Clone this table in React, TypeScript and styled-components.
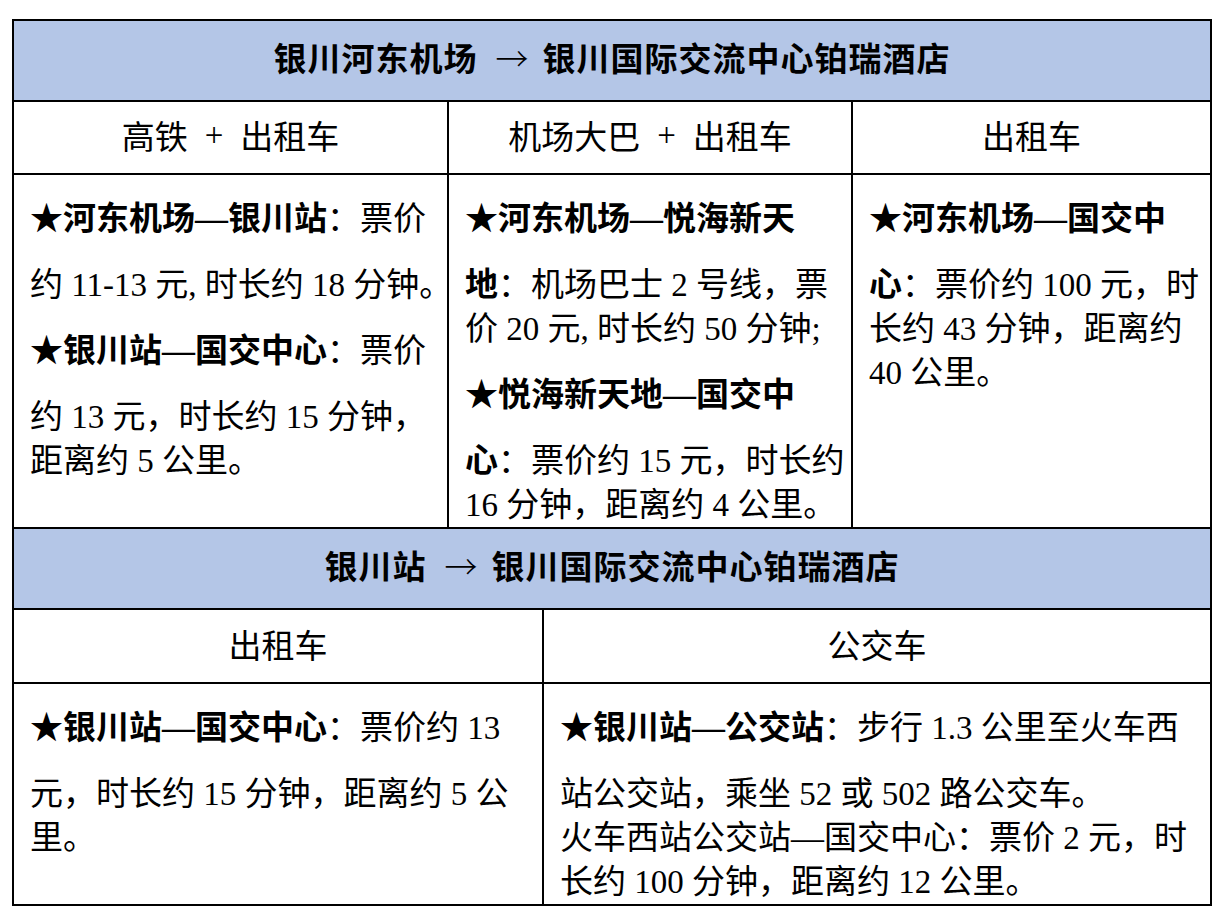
import React from "react";
import styled, { createGlobalStyle } from "styled-components";

const Global = createGlobalStyle`
  html, body { margin: 0; padding: 0; background: #ffffff; }
  body {
    font-family: "Liberation Serif", "Noto Sans CJK SC", serif;
    color: #000000;
  }
`;

const Page = styled.div`
  padding: 19px 0 14px 12px;
`;

const Table = styled.div`
  width: 1200px;
  box-sizing: border-box;
  border: 2px solid #000000;
  display: flex;
  flex-direction: column;
`;

const Section = styled.section`
  display: flex;
  flex-direction: column;
  & + & {
    border-top: 2px solid #000000;
  }
`;

const TitleBar = styled.h2`
  margin: 0;
  height: 71px;
  padding-bottom: 8px;
  background: #b4c6e7;
  border-bottom: 2px solid #000000;
  display: flex;
  align-items: center;
  justify-content: center;
  font-size: 33px;
  font-weight: 700;
  letter-spacing: 1px;
  font-family: "Liberation Serif", "Noto Sans CJK SC", sans-serif;
  white-space: nowrap;
`;

const Arrow = styled.span`
  margin: 0 14px 0 18px;
  font-weight: 300;
  letter-spacing: 0;
  font-family: "Noto Sans CJK SC", "DejaVu Sans", sans-serif;
`;

const Op = styled.span`
  margin: 0 17px;
  font-weight: 400;
`;

const Row = styled.div<{ $cols: string }>`
  display: grid;
  grid-template-columns: ${(p) => p.$cols};
  column-gap: 2px;
  background: #000000;
`;

const HeadRow = styled(Row)`
  border-bottom: 2px solid #000000;
`;

const HeadCell = styled.div<{ $h: number }>`
  height: ${(p) => p.$h - 5}px;
  padding-bottom: 5px;
  background: #ffffff;
  display: flex;
  align-items: center;
  justify-content: center;
  font-size: 33px;
  white-space: nowrap;
`;

const BodyCell = styled.div`
  background: #ffffff;
  padding: 0 16px;
  font-size: 33px;
`;

const Line = styled.div<{ $lead?: boolean }>`
  height: ${(p) => (p.$lead ? 88 : 44)}px;
  line-height: ${(p) => (p.$lead ? 88 : 44)}px;
  white-space: pre;
`;

const Strong = styled.b`
  font-weight: 700;
  font-family: "Liberation Serif", "Noto Sans CJK SC", sans-serif;
`;

type Seg = string | { b: string };
type L = { lead?: boolean; segs: Seg[] };

const renderLines = (lines: L[]) =>
  lines.map((l, i) => (
    <Line key={i} $lead={l.lead}>
      {l.segs.map((s, j) =>
        typeof s === "string" ? (
          <React.Fragment key={j}>{s}</React.Fragment>
        ) : (
          <Strong key={j}>{s.b}</Strong>
        )
      )}
    </Line>
  ));

const top1: L[] = [
  { lead: true, segs: [{ b: "★河东机场—银川站" }, "：票价"] },
  { segs: ["约 11-13 元, 时长约 18 分钟。"] },
  { lead: true, segs: [{ b: "★银川站—国交中心" }, "：票价"] },
  { segs: ["约 13 元，时长约 15 分钟，"] },
  { segs: ["距离约 5 公里。"] },
];

const top2: L[] = [
  { lead: true, segs: [{ b: "★河东机场—悦海新天" }] },
  { segs: [{ b: "地" }, "：机场巴士 2 号线，票"] },
  { segs: ["价 20 元, 时长约 50 分钟;"] },
  { lead: true, segs: [{ b: "★悦海新天地—国交中" }] },
  { segs: [{ b: "心" }, "：票价约 15 元，时长约"] },
  { segs: ["16 分钟，距离约 4 公里。"] },
];

const top3: L[] = [
  { lead: true, segs: [{ b: "★河东机场—国交中" }] },
  { segs: [{ b: "心" }, "：票价约 100 元，时"] },
  { segs: ["长约 43 分钟，距离约"] },
  { segs: ["40 公里。"] },
];

const bot1: L[] = [
  { lead: true, segs: [{ b: "★银川站—国交中心" }, "：票价约 13"] },
  { segs: ["元，时长约 15 分钟，距离约 5 公"] },
  { segs: ["里。"] },
];

const bot2: L[] = [
  { lead: true, segs: [{ b: "★银川站—公交站" }, "：步行 1.3 公里至火车西"] },
  { segs: ["站公交站，乘坐 52 或 502 路公交车。"] },
  { segs: ["火车西站公交站—国交中心：票价 2 元，时"] },
  { segs: ["长约 100 分钟，距离约 12 公里。"] },
];

const TOP_COLS = "433px 402px 357px";
const BOT_COLS = "528px 666px";

export default function App() {
  return (
    <Page>
      <Global />
      <Table>
        <Section>
          <TitleBar>
            银川河东机场<Arrow>→</Arrow>银川国际交流中心铂瑞酒店
          </TitleBar>
          <HeadRow $cols={TOP_COLS}>
            <HeadCell $h={71}>
              高铁<Op>+</Op>出租车
            </HeadCell>
            <HeadCell $h={71}>
              机场大巴<Op>+</Op>出租车
            </HeadCell>
            <HeadCell $h={71}>出租车</HeadCell>
          </HeadRow>
          <Row $cols={TOP_COLS}>
            <BodyCell>{renderLines(top1)}</BodyCell>
            <BodyCell>{renderLines(top2)}</BodyCell>
            <BodyCell>{renderLines(top3)}</BodyCell>
          </Row>
        </Section>
        <Section>
          <TitleBar>
            银川站<Arrow>→</Arrow>银川国际交流中心铂瑞酒店
          </TitleBar>
          <HeadRow $cols={BOT_COLS}>
            <HeadCell $h={72}>出租车</HeadCell>
            <HeadCell $h={72}>公交车</HeadCell>
          </HeadRow>
          <Row $cols={BOT_COLS}>
            <BodyCell>{renderLines(bot1)}</BodyCell>
            <BodyCell>{renderLines(bot2)}</BodyCell>
          </Row>
        </Section>
      </Table>
    </Page>
  );
}
